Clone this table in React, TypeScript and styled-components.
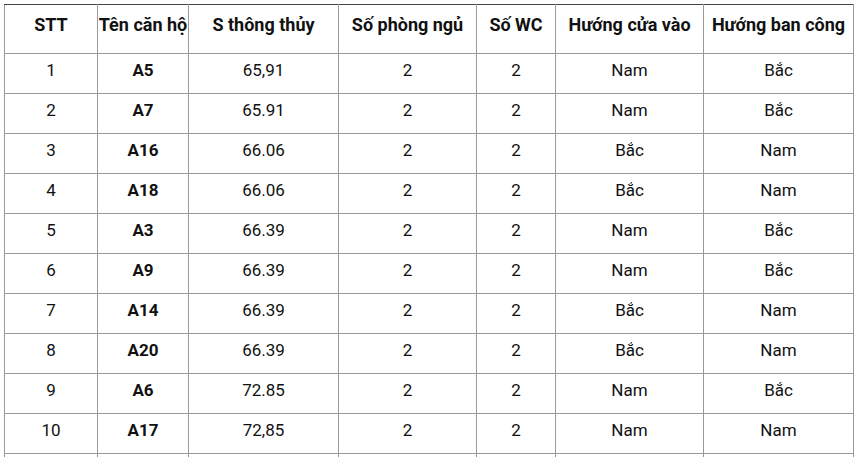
import React from "react";
import styled, { createGlobalStyle } from "styled-components";

const Global = createGlobalStyle`
  html, body { margin: 0; padding: 0; background: #fff; }
  body { font-family: Roboto, "Noto Sans", Arial, sans-serif; color: #111; }
`;

const Page = styled.div`
  padding: 4px 0 0 4px;
`;

const Table = styled.table`
  border-collapse: collapse;
  table-layout: fixed;
  width: 849px;
  border: 1px solid #444;
`;

const HeadCell = styled.th`
  height: 49px;
  padding: 0;
  border: 1px solid #999;
  border-top-color: #444;
  font-size: 18px;
  font-weight: 700;
  text-align: center;
  vertical-align: top;
  padding-top: 9px;
  box-sizing: border-box;
  white-space: nowrap;
`;

const Cell = styled.td<{ $bold?: boolean }>`
  height: 40px;
  padding: 0 0 8px;
  border: 1px solid #999;
  font-size: 17px;
  font-weight: ${(p) => (p.$bold ? 700 : 400)};
  color: #111;
  text-align: center;
  vertical-align: middle;
  box-sizing: border-box;
  white-space: nowrap;
`;

const widths = [93, 91, 150, 138, 79, 148, 150];
const headers = [
  "STT",
  "Tên căn hộ",
  "S thông thủy",
  "Số phòng ngủ",
  "Số WC",
  "Hướng cửa vào",
  "Hướng ban công",
];

type Row = [string, string, string, string, string, string, string];
const rows: Row[] = [
  ["1", "A5", "65,91", "2", "2", "Nam", "Bắc"],
  ["2", "A7", "65.91", "2", "2", "Nam", "Bắc"],
  ["3", "A16", "66.06", "2", "2", "Bắc", "Nam"],
  ["4", "A18", "66.06", "2", "2", "Bắc", "Nam"],
  ["5", "A3", "66.39", "2", "2", "Nam", "Bắc"],
  ["6", "A9", "66.39", "2", "2", "Nam", "Bắc"],
  ["7", "A14", "66.39", "2", "2", "Bắc", "Nam"],
  ["8", "A20", "66.39", "2", "2", "Bắc", "Nam"],
  ["9", "A6", "72.85", "2", "2", "Nam", "Bắc"],
  ["10", "A17", "72,85", "2", "2", "Nam", "Nam"],
  ["", "", "", "", "", "", ""],
];

export default function App() {
  return (
    <Page>
      <Global />
      <Table>
        <colgroup>
          {widths.map((w, i) => (
            <col key={i} style={{ width: w }} />
          ))}
        </colgroup>
        <thead>
          <tr>
            {headers.map((h) => (
              <HeadCell key={h}>{h}</HeadCell>
            ))}
          </tr>
        </thead>
        <tbody>
          {rows.map((r, ri) => (
            <tr key={ri}>
              {r.map((v, i) => (
                <Cell key={i} $bold={i === 1}>
                  {v}
                </Cell>
              ))}
            </tr>
          ))}
        </tbody>
      </Table>
    </Page>
  );
}
